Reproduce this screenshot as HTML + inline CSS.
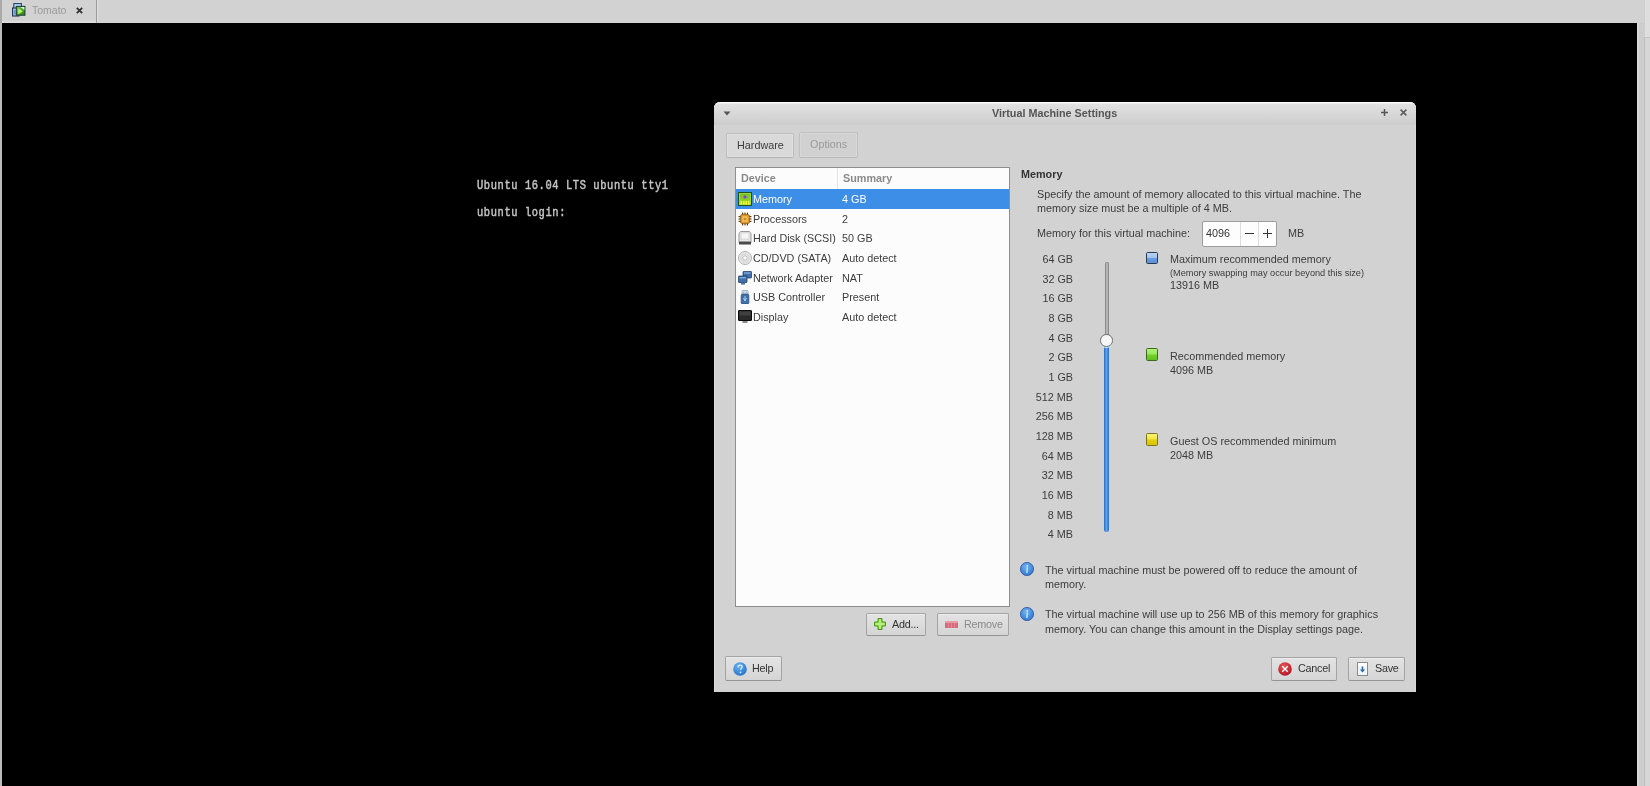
<!DOCTYPE html>
<html><head><meta charset="utf-8">
<style>
*{margin:0;padding:0;box-sizing:border-box}
html,body{width:1650px;height:786px;overflow:hidden;background:#d2d2d2}
body{position:relative;-webkit-font-smoothing:antialiased;font-family:"Liberation Sans",sans-serif;font-size:10.8px;color:#3c3c3c}
.a{position:absolute;white-space:nowrap;line-height:14px;will-change:transform}
.b{font-weight:bold}
#topbar{position:absolute;left:0;top:0;width:1650px;height:23px;background:#d2d2d2}
#console{position:absolute;left:2px;top:23px;width:1635px;height:763px;background:#000}
.con{position:absolute;will-change:transform;transform:scaleY(1.2);transform-origin:0 0;font-family:"Liberation Mono",monospace;font-weight:normal;-webkit-text-stroke:0.4px #c4c4c4;font-size:10.4px;letter-spacing:0.61px;color:#c4c4c4;line-height:16px;white-space:pre}
#dlg{position:absolute;left:714px;top:102px;width:702px;height:590px;background:#d2d2d2;box-shadow:inset 1px 0 0 #dddddd,inset -1px 0 0 #d8d8d8;border-radius:6px 6px 0 0;overflow:hidden}
#titlebar{position:absolute;left:0;top:0;width:702px;height:23px;background:linear-gradient(#e2e2e2,#cdcdcd);border-top:1px solid #fbfbfb;box-shadow:inset 0 1px 0 #ececec}
.btn{position:absolute;border:1px solid #a4a4a4;border-bottom-color:#959595;border-radius:2px;background:linear-gradient(#e3e3e3,#d5d5d5);box-shadow:inset 0 1px 0 #ececec}
.ico{position:absolute;line-height:0}
.ico svg{display:block}
.row{position:absolute;left:1px;width:271px;height:20px}
.lbl{position:absolute;right:0;width:60px;text-align:right;white-space:nowrap;line-height:14px}
.lg{position:absolute;width:12.5px;height:12.5px;border:1.6px solid;border-radius:1.5px}
</style></head><body>
<div id="topbar">
  <div class="a" style="left:32px;top:3px;color:#9a9a9a;font-size:10.5px">Tomato</div>
  <div style="position:absolute;left:0;top:0;width:2px;height:23px;background:#a9a9a9"></div>
  <div style="position:absolute;left:2px;top:21px;width:94px;height:2px;background:#dcdcdc"></div>
  <div class="ico i-tab" style="left:12px;top:3px"><svg width="14" height="14" viewBox="0 0 14 14"><defs><linearGradient id="gt" x1="0" y1="0" x2="1" y2="1"><stop offset="0" stop-color="#6ac04a"/><stop offset="0.5" stop-color="#4ea82a"/><stop offset="1" stop-color="#2a7a1a"/></linearGradient></defs><rect x="1.8" y="0.6" width="7.6" height="6" fill="#b8d8f6" stroke="#2a3e6e" stroke-width="1.1"/><rect x="0.6" y="5" width="6.4" height="8" fill="#a8cef2" stroke="#1e3050" stroke-width="1.1"/><rect x="1.9" y="7" width="1.6" height="4.5" fill="#6a96cc"/><rect x="4.3" y="3.4" width="8.6" height="8.8" fill="url(#gt)" stroke="#23403a" stroke-width="1.1"/><path d="M8.5 3.9h3.9v3z" fill="#d8f4e0"/><path d="M6.2 5.2v6l4.6-3z" fill="#b4f870"/></svg></div>
  <svg style="position:absolute;left:76px;top:7px" width="7" height="7" viewBox="0 0 7 7"><path d="M0.8 0.8l5.4 5.4M6.2 0.8l-5.4 5.4" stroke="#333" stroke-width="1.8"/></svg>
  <div style="position:absolute;left:96px;top:0;width:1px;height:23px;background:#9a9a9a"></div>
  <div style="position:absolute;left:97px;top:0;width:1px;height:23px;background:#e2e2e2"></div>
</div>
<div style="position:absolute;left:0;top:23px;width:2px;height:763px;background:#bcbcbc"></div>
<div style="position:absolute;left:1637px;top:23px;width:13px;height:763px;background:linear-gradient(90deg,#d8d8d8 0,#d8d8d8 2px,#cdcdcd 2px,#cdcdcd 7px,#bebebe 7px,#bebebe 8px,#d6d6d6 8px)"></div>
<div style="position:absolute;left:1644px;top:0;width:6px;height:37px;background:linear-gradient(90deg,#cfcfcf 0,#cfcfcf 1px,#dedede 1px)"></div>
<div style="position:absolute;left:1644px;top:37px;width:6px;height:1px;background:#c4c4c4"></div>
<div id="console">
  <div class="con" style="left:474.5px;top:152.5px">Ubuntu 16.04 LTS ubuntu tty1</div>
  <div class="con" style="left:474.5px;top:180px">ubuntu login:</div>
</div>
<div id="dlg">
  <div id="titlebar"></div>
  <div class="a b" style="left:278px;top:4px;color:#555">Virtual Machine Settings</div>
  <svg style="position:absolute;left:9px;top:9px" width="8" height="5" viewBox="0 0 8 5"><path d="M0.5 0.5h7L4 4.5z" fill="#555"/></svg>
  <svg style="position:absolute;left:667px;top:7.2px" width="7" height="7" viewBox="0 0 7 7"><path d="M3.5 0v7M0 3.5h7" stroke="#555" stroke-width="1.5"/></svg>
  <svg style="position:absolute;left:685.8px;top:7.2px" width="7" height="7" viewBox="0 0 7 7"><path d="M0.6 0.6l5.8 5.8M6.4 0.6l-5.8 5.8" stroke="#5c5c5c" stroke-width="1.5"/></svg>
  <!-- tabs -->
  <div style="position:absolute;left:12px;top:31px;width:68px;height:25px;border:1px solid #bdbdbd;border-bottom-color:#b0b0b0;border-radius:2px;background:#d9d9d9;box-shadow:inset 0 0 0 1px #e0e0e0"></div>
  <div style="position:absolute;left:85px;top:30px;width:59px;height:26px;border:1px solid #c0c0c0;border-bottom-color:#b8b8b8;border-radius:2px;background:#d1d1d1;box-shadow:inset 0 0 0 1px #d8d8d8"></div>
  <div class="a" style="left:23px;top:36px">Hardware</div>
  <div class="a" style="left:96px;top:35px;color:#9a9a9a">Options</div>
  <!-- list -->
  <div id="list" style="position:absolute;left:21px;top:65px;width:275px;height:440px;background:#fcfcfc;border:1px solid #8f8f8f">
    <div style="position:absolute;left:101px;top:0;width:1px;height:21px;background:#e4e4e4"></div>
    <div class="a b" style="left:5px;top:2.5px;color:#8a8a8a">Device</div>
    <div class="a b" style="left:107px;top:2.5px;color:#8a8a8a">Summary</div>
    <div class="row" style="top:21px;background:#3d8ee6;left:0;width:273px"></div>
    <div class="ico i-mem" style="left:2px;top:24.00px"><svg width="14" height="14" viewBox="0 0 14 14"><defs><linearGradient id="gm" x1="0" y1="0" x2="0" y2="1"><stop offset="0" stop-color="#6cc224"/><stop offset="0.6" stop-color="#8ed21e"/><stop offset="1" stop-color="#c8e02a"/></linearGradient></defs><rect x="0.5" y="0.5" width="13" height="13" fill="url(#gm)" stroke="#24501a"/><rect x="1.4" y="1.4" width="11.2" height="11.2" fill="none" stroke="#9ee04a" stroke-width="0.7"/><path d="M7 2.6l3 2.6-3 2.4-3-2.4z" fill="#9a86a8"/><path d="M7 3.6l1.6 1.5L7 6.3 5.4 5.1z" fill="#6a4a8a"/><g fill="#f8f440"><rect x="2.6" y="9" width="1.4" height="3.4"/><rect x="5.2" y="9" width="1.4" height="3.4"/><rect x="7.6" y="9" width="1.4" height="3.4"/><rect x="10" y="9" width="1.4" height="3.4"/></g></svg></div>
    <div class="a" style="left:17px;top:24.00px;color:#fff">Memory</div>
    <div class="a" style="left:106px;top:24.00px;color:#fff">4 GB</div>
    <div class="ico i-cpu" style="left:2px;top:43.63px"><svg width="14" height="14" viewBox="0 0 14 14"><g fill="#5a3a10"><rect x="4" y="0.6" width="1.2" height="2.4"/><rect x="6.4" y="0.6" width="1.2" height="2.4"/><rect x="8.8" y="0.6" width="1.2" height="2.4"/><rect x="4" y="11" width="1.2" height="2.4"/><rect x="6.4" y="11" width="1.2" height="2.4"/><rect x="8.8" y="11" width="1.2" height="2.4"/><rect x="0.6" y="4" width="2.4" height="1.2"/><rect x="0.6" y="6.4" width="2.4" height="1.2"/><rect x="0.6" y="8.8" width="2.4" height="1.2"/><rect x="11" y="4" width="2.4" height="1.2"/><rect x="11" y="6.4" width="2.4" height="1.2"/><rect x="11" y="8.8" width="2.4" height="1.2"/></g><rect x="2.6" y="2.6" width="8.8" height="8.8" rx="1.2" fill="#e49a2e" stroke="#8a5a1a" stroke-width="0.7"/><rect x="4.3" y="4.3" width="5.4" height="5.4" fill="#f4c25a"/><rect x="5.6" y="5.8" width="2.8" height="2.4" fill="#d08a28"/></svg></div>
    <div class="a" style="left:17px;top:43.63px;color:#3c3c3c">Processors</div>
    <div class="a" style="left:106px;top:43.63px;color:#3c3c3c">2</div>
    <div class="ico i-hdd" style="left:2px;top:63.26px"><svg width="14" height="14" viewBox="0 0 14 14"><path d="M2.5 0.5h9l1.5 2v9.5h-12V2.5z" fill="#e6e6e6" stroke="#9a9a9a"/><rect x="3" y="2" width="8" height="6" fill="#f6f6f6" stroke="#c8c8c8" stroke-width="0.6"/><rect x="1" y="10.5" width="12" height="3" fill="#4a4a4a"/><rect x="1" y="10" width="12" height="1" fill="#9a9a9a"/></svg></div>
    <div class="a" style="left:17px;top:63.26px;color:#3c3c3c">Hard Disk (SCSI)</div>
    <div class="a" style="left:106px;top:63.26px;color:#3c3c3c">50 GB</div>
    <div class="ico i-cd" style="left:2px;top:82.89px"><svg width="14" height="14" viewBox="0 0 14 14"><circle cx="7" cy="7" r="6.5" fill="#e8e8e8" stroke="#b4b4b4"/><circle cx="7" cy="7" r="4.2" fill="none" stroke="#d4d4d4" stroke-width="1"/><circle cx="7" cy="7" r="2.2" fill="#fafafa" stroke="#b0b0b0" stroke-width="0.8"/></svg></div>
    <div class="a" style="left:17px;top:82.89px;color:#3c3c3c">CD/DVD (SATA)</div>
    <div class="a" style="left:106px;top:82.89px;color:#3c3c3c">Auto detect</div>
    <div class="ico i-net" style="left:2px;top:102.52px"><svg width="14" height="14" viewBox="0 0 14 14"><rect x="5" y="0.5" width="8.5" height="6.5" rx="0.5" fill="#3f6fa8" stroke="#24456e" stroke-width="0.8"/><rect x="6" y="1.3" width="6.5" height="1.5" fill="#7aa6d8"/><rect x="0.5" y="5" width="8.5" height="6.5" rx="0.5" fill="#3f6fa8" stroke="#24456e" stroke-width="0.8"/><rect x="1.5" y="6" width="6.5" height="1.5" fill="#7aa6d8"/><rect x="3" y="12" width="4" height="1.6" fill="#5a7aa0"/></svg></div>
    <div class="a" style="left:17px;top:102.52px;color:#3c3c3c">Network Adapter</div>
    <div class="a" style="left:106px;top:102.52px;color:#3c3c3c">NAT</div>
    <div class="ico i-usb" style="left:2px;top:122.15px"><svg width="14" height="14" viewBox="0 0 14 14"><rect x="4" y="0.5" width="6" height="4" rx="0.8" fill="#e8eef6" stroke="#8aa0bc" stroke-width="0.8"/><rect x="5.2" y="1.6" width="1.2" height="1.2" fill="#7a90b0"/><rect x="7.6" y="1.6" width="1.2" height="1.2" fill="#7a90b0"/><rect x="3.2" y="4" width="7.6" height="10" rx="1.5" fill="#3f6fa8" stroke="#2a4f80" stroke-width="0.8"/><path d="M7 6v5M5.5 8l1.5 3 1.5-3" stroke="#b8d0ee" stroke-width="0.9" fill="none"/></svg></div>
    <div class="a" style="left:17px;top:122.15px;color:#3c3c3c">USB Controller</div>
    <div class="a" style="left:106px;top:122.15px;color:#3c3c3c">Present</div>
    <div class="ico i-disp" style="left:2px;top:141.78px"><svg width="14" height="14" viewBox="0 0 14 14"><rect x="0.5" y="0.5" width="13" height="10" rx="0.5" fill="#2a2a2a" stroke="#0a0a0a"/><rect x="1.5" y="1.5" width="11" height="4" fill="#404040"/><rect x="4.5" y="11" width="5" height="2" fill="#8a8a8a"/></svg></div>
    <div class="a" style="left:17px;top:141.78px;color:#3c3c3c">Display</div>
    <div class="a" style="left:106px;top:141.78px;color:#3c3c3c">Auto detect</div>
  </div>
  <div id="right"></div>
</div>
<div id="pg">
<div class="a" style="left:1020.7px;top:167.06px;font-weight:bold;color:#333">Memory</div>
<div class="a" style="left:1037.4px;top:187.06px;">Specify the amount of memory allocated to this virtual machine. The</div>
<div class="a" style="left:1037.4px;top:201.16px;">memory size must be a multiple of 4 MB.</div>
<div class="a" style="left:1037.4px;top:226.06px;">Memory for this virtual machine:</div>
<div style="position:absolute;left:1202px;top:221px;width:75px;height:26px;border:1px solid #9d9d9d;border-radius:2px;background:#fdfdfd"></div>
<div style="position:absolute;left:1240px;top:222px;width:1px;height:24px;background:#dcdcdc"></div>
<div style="position:absolute;left:1258px;top:222px;width:1px;height:24px;background:#dcdcdc"></div>
<div class="a" style="left:1206.4px;top:226.06px;color:#333">4096</div>
<div style="position:absolute;left:1245px;top:232.8px;width:8.5px;height:1.6px;background:#333"></div>
<div style="position:absolute;left:1263px;top:232.8px;width:8.5px;height:1.6px;background:#333"></div>
<div style="position:absolute;left:1266.5px;top:229.3px;width:1.6px;height:8.5px;background:#333"></div>
<div class="a" style="left:1287.8px;top:226.06px;">MB</div>
<div class="a" style="left:1013px;width:60px;text-align:right;top:251.96px">64 GB</div>
<div class="a" style="left:1013px;width:60px;text-align:right;top:271.62px">32 GB</div>
<div class="a" style="left:1013px;width:60px;text-align:right;top:291.28px">16 GB</div>
<div class="a" style="left:1013px;width:60px;text-align:right;top:310.94px">8 GB</div>
<div class="a" style="left:1013px;width:60px;text-align:right;top:330.60px">4 GB</div>
<div class="a" style="left:1013px;width:60px;text-align:right;top:350.26px">2 GB</div>
<div class="a" style="left:1013px;width:60px;text-align:right;top:369.92px">1 GB</div>
<div class="a" style="left:1013px;width:60px;text-align:right;top:389.58px">512 MB</div>
<div class="a" style="left:1013px;width:60px;text-align:right;top:409.24px">256 MB</div>
<div class="a" style="left:1013px;width:60px;text-align:right;top:428.90px">128 MB</div>
<div class="a" style="left:1013px;width:60px;text-align:right;top:448.56px">64 MB</div>
<div class="a" style="left:1013px;width:60px;text-align:right;top:468.22px">32 MB</div>
<div class="a" style="left:1013px;width:60px;text-align:right;top:487.88px">16 MB</div>
<div class="a" style="left:1013px;width:60px;text-align:right;top:507.54px">8 MB</div>
<div class="a" style="left:1013px;width:60px;text-align:right;top:527.20px">4 MB</div>
<div style="position:absolute;left:1104.5px;top:262px;width:4.5px;height:80px;border-radius:2px 2px 0 0;background:#b4b4b4;border:1px solid #8c8c8c;border-bottom:0"></div>
<div style="position:absolute;left:1104px;top:340px;width:5px;height:192px;border-radius:0 0 2.5px 2.5px;background:linear-gradient(90deg,#2c6cc0,#5ea2f2 50%,#2c6cc0)"></div>
<div style="position:absolute;left:1100.3px;top:334px;width:12.5px;height:12.5px;border-radius:50%;background:#f6f6f6;border:1px solid #6e6e6e;box-shadow:0 1px 0 #cfe6fa"></div>
<div class="lg" style="left:1145.5px;top:251.5px;border-color:#283a52;background:linear-gradient(#b8d4f4 0,#9fc2ec 48%,#6c9de0 52%,#5a8ed8 100%)"></div>
<div class="lg" style="left:1145.5px;top:348px;border-color:#3b6a1c;background:linear-gradient(#b0f27a 0,#98e85a 48%,#72d02a 52%,#60c020 100%)"></div>
<div class="lg" style="left:1145.5px;top:433px;border-color:#7c7418;background:linear-gradient(#f8f27a 0,#f0e440 48%,#e2d010 52%,#d8c408 100%)"></div>
<div class="a" style="left:1170px;top:251.86px;">Maximum recommended memory</div>
<div class="a" style="left:1170px;top:266.6px;font-size:9.2px;line-height:12px">(Memory swapping may occur beyond this size)</div>
<div class="a" style="left:1170px;top:277.96px;">13916 MB</div>
<div class="a" style="left:1170px;top:348.66px;">Recommended memory</div>
<div class="a" style="left:1170px;top:362.86px;">4096 MB</div>
<div class="a" style="left:1170px;top:433.66px;">Guest OS recommended minimum</div>
<div class="a" style="left:1170px;top:447.86px;">2048 MB</div>
<div class="ico i-info" style="left:1020px;top:562px"><svg width="14" height="14" viewBox="0 0 14 14"><defs><radialGradient id="gi" cx="0.45" cy="0.35" r="0.7"><stop offset="0" stop-color="#7ab4f0"/><stop offset="0.7" stop-color="#3f86d8"/><stop offset="1" stop-color="#3470c0"/></radialGradient></defs><circle cx="7" cy="7" r="6.6" fill="url(#gi)" stroke="#3a62a8" stroke-width="0.9"/><circle cx="7.3" cy="3.8" r="0.9" fill="#c8f4ff"/><path d="M7.3 5.8L6.9 10.6" stroke="#bff2ff" stroke-width="1.3" stroke-linecap="round"/></svg></div>
<div class="ico i-info" style="left:1020px;top:607px"><svg width="14" height="14" viewBox="0 0 14 14"><defs><radialGradient id="gi" cx="0.45" cy="0.35" r="0.7"><stop offset="0" stop-color="#7ab4f0"/><stop offset="0.7" stop-color="#3f86d8"/><stop offset="1" stop-color="#3470c0"/></radialGradient></defs><circle cx="7" cy="7" r="6.6" fill="url(#gi)" stroke="#3a62a8" stroke-width="0.9"/><circle cx="7.3" cy="3.8" r="0.9" fill="#c8f4ff"/><path d="M7.3 5.8L6.9 10.6" stroke="#bff2ff" stroke-width="1.3" stroke-linecap="round"/></svg></div>
<div class="a" style="left:1044.6px;top:562.66px;">The virtual machine must be powered off to reduce the amount of</div>
<div class="a" style="left:1044.6px;top:576.66px;">memory.</div>
<div class="a" style="left:1044.6px;top:606.96px;">The virtual machine will use up to 256 MB of this memory for graphics</div>
<div class="a" style="left:1044.6px;top:621.56px;">memory. You can change this amount in the Display settings page.</div>
<div class="btn" style="left:866px;top:613px;width:60px;height:23px"></div>
<div class="ico i-add" style="left:874px;top:618px"><svg width="12" height="12" viewBox="0 0 12 12"><path d="M4 0.5h4v3.5h3.5v4H8v3.5H4V8H0.5V4H4z" fill="#8fdc4a" stroke="#4a9a1a"/><path d="M5 1.5h2v3.5h3.5v2H7v3.5H5V7H1.5V5H5z" fill="#b6ef7a"/></svg></div>
<div class="a" style="left:892.4px;top:616.96px;color:#333;letter-spacing:-0.25px">Add...</div>
<div class="btn" style="left:937px;top:613px;width:72px;height:23px"></div>
<div class="ico i-rem" style="left:945px;top:621px"><svg width="13" height="7" viewBox="0 0 13 7"><rect x="0" y="0" width="13" height="7" fill="#d86a7a"/><rect x="0" y="0" width="13" height="2" fill="#e89aa6"/><path d="M3.5 0v7M6.5 0v7M9.5 0v7" stroke="#e6a0aa" stroke-width="0.6"/></svg></div>
<div class="a" style="left:963.8px;top:616.96px;color:#8a8a8a;letter-spacing:-0.25px">Remove</div>
<div class="btn" style="left:725px;top:656px;width:57px;height:25px"></div>
<div class="ico i-help" style="left:733px;top:662px"><svg width="14" height="14" viewBox="0 0 14 14"><defs><radialGradient id="gh" cx="0.4" cy="0.3" r="0.8"><stop offset="0" stop-color="#6ab4f4"/><stop offset="1" stop-color="#1f6ac4"/></radialGradient></defs><circle cx="7" cy="7" r="6.8" fill="url(#gh)"/><path d="M5 5.2c0-1.3 1-2 2.2-2 1.2 0 2 .8 2 1.8 0 1.2-1.6 1.4-1.6 2.8" stroke="#d8f0ff" stroke-width="1.3" fill="none"/><circle cx="7.5" cy="10.3" r="0.9" fill="#d8f0ff"/></svg></div>
<div class="a" style="left:752.2px;top:661.16px;color:#333;letter-spacing:-0.25px">Help</div>
<div class="btn" style="left:1271px;top:657px;width:66px;height:24px"></div>
<div class="ico i-cancel" style="left:1278px;top:662px"><svg width="14" height="14" viewBox="0 0 14 14"><defs><radialGradient id="gc" cx="0.4" cy="0.3" r="0.8"><stop offset="0" stop-color="#e85a5a"/><stop offset="0.6" stop-color="#c82a30"/><stop offset="1" stop-color="#a01828"/></radialGradient></defs><circle cx="7" cy="7" r="6.8" fill="url(#gc)"/><path d="M4.2 4.2l5.6 5.6M9.8 4.2l-5.6 5.6" stroke="#fff" stroke-width="1.4"/></svg></div>
<div class="a" style="left:1297.7px;top:661.06px;color:#333;letter-spacing:-0.25px">Cancel</div>
<div class="btn" style="left:1348px;top:657px;width:57px;height:24px"></div>
<div class="ico i-save" style="left:1357px;top:662px"><svg width="11" height="14" viewBox="0 0 11 14"><rect x="0.5" y="0.5" width="10" height="13" fill="#f2f6fa" stroke="#8a8a8a"/><rect x="1" y="1" width="9" height="3" fill="#ffffff"/><path d="M5.5 4.5v4" stroke="#2f6aa8" stroke-width="1.6"/><path d="M2.8 7.5l2.7 3 2.7-3z" fill="#2f6aa8"/></svg></div>
<div class="a" style="left:1374.5px;top:661.06px;color:#333;letter-spacing:-0.25px">Save</div>
</div>
</body></html>
